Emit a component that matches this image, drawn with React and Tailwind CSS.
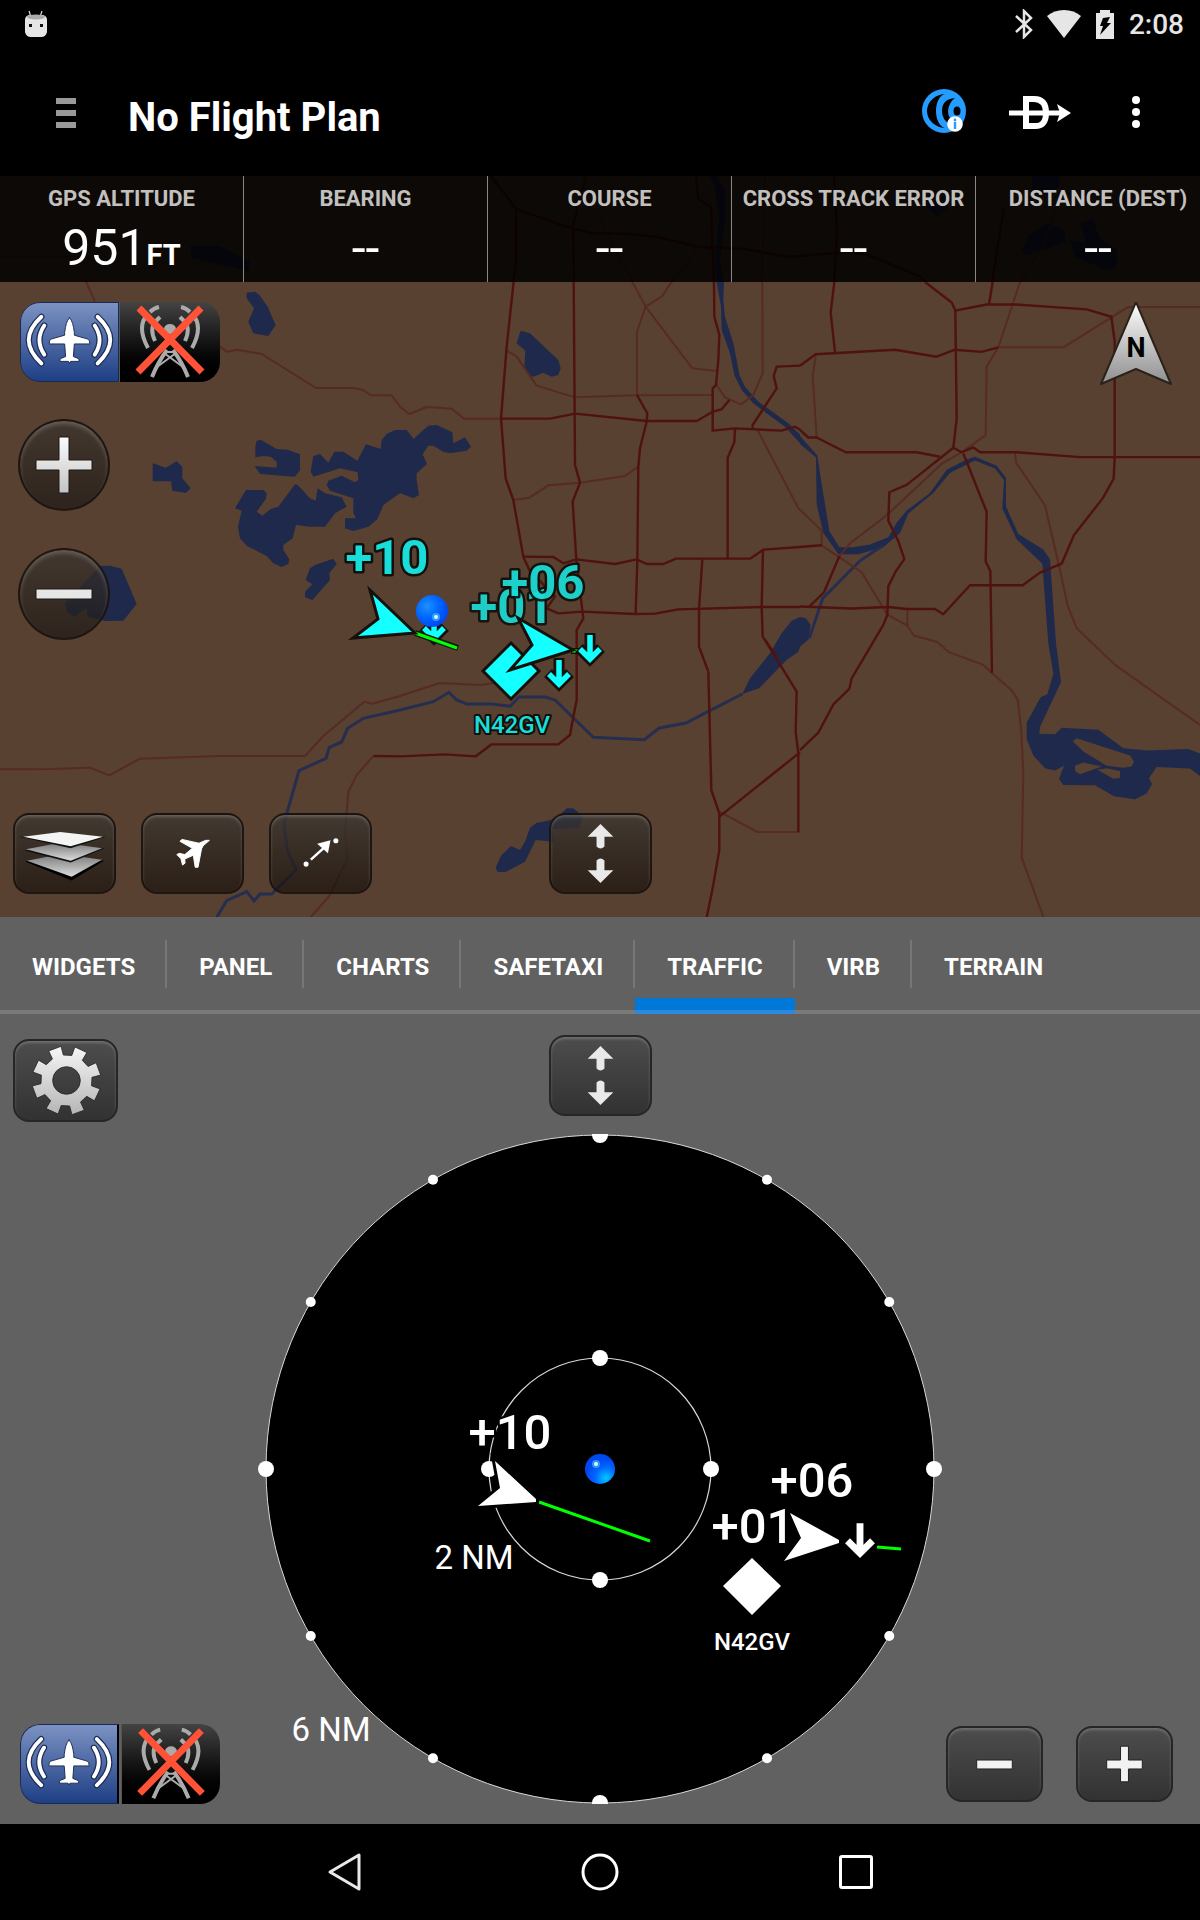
import React from "react";

const FONT = { fontFamily: "Roboto, 'Liberation Sans', sans-serif" };

/* ---------- map data: each tile has its own origin and grid ---------- */

const TILES = [
  {
    id: "north",
    transform: "translate(0 0)",
    major: [
      "491,176 516,209 516,260 513,283",
      "516,209 570,228 592,233 630,234 657,237 700,247 745,249 788,257 849,252 868,255 921,277 926,282",
      "586,176 573,225 574,283",
      "696,176 698,199 711,207 714,283",
      "834,176 837,233 834,283",
      "1004,207 992,283",
    ],
    minor: [
      "78,267 87,283",
      "0,257 78,257",
      "1065,180 1046,240 1020,283",
      "765,176 762,283",
      "600,220 633,283",
      "697,250 671,283",
    ],
    water: [
      "190,246 220,246 250,262 248,272 235,268 192,258",
      "709,176 717,176 725,190 725,217 720,260 724,283 717,283 715,260 719,217 715,187",
      "1032,176 1059,176 1059,187 1046,195 1032,190",
      "1021,252 1029,235 1048,223 1065,230 1065,243 1027,255",
      "1080,223 1092,218 1101,240 1117,250 1117,267 1109,271 1075,257 1070,240 1086,243",
      "921,203 937,200 950,193 948,208 937,216",
    ],
    creek: [],
  },
  {
    id: "northwest",
    transform: "translate(0 280) scale(.33333)",
    major: [],
    minor: [
      "258,5 285,65",
      "640,190 660,200 680,215 712,209 785,222 948,324 1060,324 1090,330 1112,346 1175,346 1200,380 1228,402 1280,381 1355,386 1392,416 1503,416",
    ],
    water: [
      "740,38 765,35 778,45 803,80 827,135 805,168 760,160 745,125 762,85 740,55",
      "458,550 497,563 530,544 547,560 547,595 572,625 558,639 517,632 513,604 458,604",
      "770,482 782,479 830,507 862,509 900,523 900,570 885,590 780,582 764,558 830,563 830,545 812,530 790,528 766,532 766,500",
      "940,528 960,522 985,548 1003,515 1030,515 1072,542 1098,493 1142,507 1145,480 1160,462 1185,450 1220,450 1241,477 1270,450 1285,437 1310,435 1357,457 1360,490 1395,472 1413,500 1400,512 1350,520 1330,515 1300,497 1285,497 1268,523 1281,552 1250,580 1250,600 1257,645 1240,655 1215,645 1200,640 1150,675 1132,718 1105,740 1060,753 1035,745 1035,715 1068,715 1060,700 1060,655 990,632 980,615 985,602 1025,587 1065,607 1075,600 1073,577 1020,565 940,590 932,575",
      "738,630 790,630 800,640 797,658 770,695 787,707 812,687 835,680 885,613 893,615 930,655 947,662 953,625 975,640 1025,652 1040,680 1005,700 975,740 930,740 888,735 878,775 850,795 850,810 868,838 865,852 845,861 820,850 800,828 740,797 720,775 714,740 725,692 705,685",
      "930,865 945,855 1000,836 1010,852 988,880 990,900 937,960 915,952 915,935 937,913 917,900",
      "300,858 330,857 365,866 410,972 370,1022 315,1023 262,1010 260,985 222,1010 200,995 195,970",
    ],
    creek: [],
  },
  {
    id: "center",
    transform: "translate(400 280) scale(.33333)",
    major: [
      "341,5 320,200 303,415 317,595 340,660 370,830 388,870 465,950 440,985 475,1000 545,995 705,1002 765,1001 835,988 1085,981 1200,981",
      "521,5 524,400 525,555 540,608 518,665 529,840 542,950 550,1015 530,1050 530,1260 520,1310 510,1365 475,1393 275,1393 227,1429 135,1423 0,1429 -80,1428",
      "303,416 450,416 525,401 740,423 890,423 938,395 965,388 988,360",
      "942,5 943,110 958,165 955,240 948,315 938,325 938,452 1005,445 1145,452 1185,440 1200,449",
      "711,345 742,400 740,425 720,505 715,560 712,840 707,1000",
      "1005,445 1003,487 983,533 983,836",
      "370,830 460,831 490,850 529,838 645,852 710,838 740,852 790,852 828,836 1050,836 1090,809 1200,801",
      "907,838 897,988 897,1100 925,1175",
      "1089,809 1085,981 1088,1070 1130,1130",
      "1200,257 1130,260 1121,288 1130,325 1058,435 1058,445",
    ],
    minor: [
      "320,212 350,230 410,317 525,352 710,346 938,345",
      "697,5 737,80 711,155 711,345",
      "815,5 785,50 737,80 877,265 950,273",
      "1087,5 1088,280 1060,345 1023,373 975,352 950,315",
      "340,660 388,653 445,616 540,608 675,588 715,560",
      "1070,445 1195,685 1200,690",
    ],
    water: [
      "350,190 362,152 390,160 475,240 482,265 475,285 455,290 430,278 400,290 385,285 373,260 376,212",
      "950,5 972,5 970,60 975,110 1000,190 1010,240 1018,285 1035,320 1075,365 1110,390 1165,430 1200,464 1200,490 1155,440 1100,400 1060,370 1025,330 1003,285 990,220 965,150 963,80",
      "1200,1011 1218,1015 1232,1035 1226,1078 1200,1100 1195,1115 1160,1140 1077,1225 1027,1242 1050,1195 1110,1120 1145,1060 1175,1022",
    ],
    creek: [],
  },
  {
    id: "east",
    transform: "translate(800 280) scale(.33333 .40816)",
    major: [
      "103,5 92,80 105,176",
      "0,210 47,182 285,171 410,188 463,171 545,176 595,165",
      "375,5 455,55 466,75 560,60 645,60 860,72 934,90 944,150 944,435 941,487 908,535 822,625 785,695 720,717 668,748 510,748 430,819 405,806 320,806 265,801 155,805 0,800",
      "578,5 567,60",
      "466,75 470,340 460,411 485,422 520,410 540,422 650,422 840,434 1200,434",
      "490,425 560,568 557,690 571,713 576,962",
      "0,367 25,386 50,386 137,422 350,422 420,433",
      "0,654 65,650",
      "28,800 72,765 118,677",
      "460,411 320,502 268,520 265,590 295,640 313,684 288,713 265,750 262,820 250,845 155,976 148,1002 100,1040 55,1109 0,1152",
    ],
    minor: [
      "47,187 38,235 50,386",
      "660,5 595,165 560,212 557,380 485,422 425,450 262,575 150,645 118,677",
      "595,165 790,165 985,66 1200,66",
      "645,422 648,447 735,552 777,700 803,798 830,853 945,943 1200,1090",
      "322,806 322,847",
      "0,563 65,614 65,650 185,716 262,820 322,847 342,871 412,887 445,911 550,943 575,962 635,1005 653,1028 664,1105 670,1210 665,1415 730,1560",
    ],
    water: [
      "0,382 52,430 65,500 88,615 118,655 160,655 210,648 265,630 290,595 320,565 390,522 440,465 500,440 525,433 590,455 618,485 618,555 655,622 730,660 750,685 768,890 783,985 720,1095 718,1112 765,1113 785,1097 895,1102 970,1147 1045,1153 1165,1149 1200,1160 1200,1215 1170,1197 1070,1193 1047,1220 1056,1235 1040,1258 1005,1272 942,1265 885,1238 790,1237 777,1222 792,1190 765,1202 735,1196 700,1165 680,1125 680,1085 722,1022 742,1015 760,965 745,890 727,695 650,635 607,560 612,490 585,462 525,442 450,472 400,522 325,572 300,620 250,655 175,672 115,672 70,620 50,550 48,435 0,402",
    ],
    creek: ["250,650 180,688 68,780 28,878"],
    islands: [
      "818,1130 830,1123 990,1165 1002,1180 995,1192 970,1195 920,1190 850,1155",
      "825,1190 850,1182 905,1192 840,1211 825,1203",
      "892,1200 920,1196 960,1203 960,1220 940,1222",
    ],
  },
  {
    id: "southwest",
    transform: "translate(0 640) scale(.33333)",
    major: [],
    minor: [
      "0,388 155,387 270,383 328,406 420,356 660,348 915,348 970,288 1093,185 1118,191 1200,168 1320,129 1440,135 1500,127",
      "1120,348 1070,405 1045,455 1035,575 1043,655 988,768 933,830",
    ],
    water: [],
    creek: [
      "650,832 680,782 740,755 762,783 780,762 815,762 888,690 862,630 852,550 897,392 978,355 988,322 1025,306 1043,265 1090,235 1200,210",
    ],
  },
  {
    id: "south",
    transform: "translate(400 640) scale(.33333)",
    major: [
      "925,95 934,450 958,520 958,630 938,745 920,832",
      "1095,0 1190,155 1187,275 1195,340 1195,577",
      "958,530 1200,337",
    ],
    minor: ["958,515 1073,576 1195,576"],
    water: [
      "430,545 470,535 500,505 520,505 550,530 537,563 457,567 462,605 407,600 375,665 315,697 292,695 287,683 303,647 333,618 360,630 375,605 390,563 410,548",
    ],
    creek: [
      "0,210 100,185 147,157 170,180 200,192 275,192 330,199 357,171 435,171 465,180 580,292 733,299 778,264 858,249 925,214 1027,162",
    ],
  },
];

function Ball({ cx, cy, r, flip }) {
  const id = flip ? "ballMap" : "ballScope";
  return (
    <g transform={`translate(${cx} ${cy})`}>
      <defs>
        <radialGradient id={id} cx={flip ? ".35" : ".7"} cy={flip ? ".35" : ".8"} r=".65">
          <stop offset="0" stopColor={flip ? "#1e90ff" : "#00c8ff"} />
          <stop offset=".55" stopColor="#0068ff" />
          <stop offset="1" stopColor="#0048f0" />
        </radialGradient>
      </defs>
      <circle r={r} fill={`url(#${id})`} />
      <circle cx={flip ? 4 : -4} cy={flip ? 6 : -5} r="4" fill="#4fc4ff" opacity=".6" />
      <circle cx={flip ? 4 : -4} cy={flip ? 6 : -5} r="2" fill="#d8faff" />
    </g>
  );
}

function DownArrow({ x, y, color, halo, size = 1 }) {
  return (
    <g transform={`translate(${x} ${y}) scale(${size})`} strokeLinecap="butt" fill="none">
      <path d="M0 -29 V-5 M-11 -14 L0 -3 L11 -14" stroke={halo} strokeWidth="11" />
      <path d="M0 -27 V-5 M-10 -13 L0 -3 L10 -13" stroke={color} strokeWidth="5.5" />
    </g>
  );
}

function MovingMap() {
  return (
    <svg
      viewBox="0 176 1200 741"
      preserveAspectRatio="xMidYMid slice"
      className="absolute inset-0 h-full w-full"
      role="img"
      aria-label="Moving map with traffic"
    >
      {TILES.map((t) => (
        <g key={t.id} transform={t.transform} fill="none">
          {t.water.map((p) => (
            <polygon key={p} points={p} fill="#1f294b" />
          ))}
          {(t.islands || []).map((p) => (
            <polygon key={p} points={p} fill="#584130" />
          ))}
          {t.creek.map((p) => (
            <polyline key={p} points={p} stroke="#262e50" strokeWidth="3" vectorEffect="non-scaling-stroke" />
          ))}
        </g>
      ))}
      {TILES.map((t) => (
        <g key={t.id} transform={t.transform} fill="none" strokeLinejoin="round">
          {t.minor.map((p) => (
            <polyline key={p} points={p} stroke="#572a23" strokeWidth="2" vectorEffect="non-scaling-stroke" />
          ))}
          {t.major.map((p) => (
            <polyline key={p} points={p} stroke="#50120f" strokeWidth="2.400" vectorEffect="non-scaling-stroke" />
          ))}
        </g>
      ))}

      <DownArrow x={434} y={641} color="#14ffff" halo="#15100c" />
      <path d="M415 633 L458 648" stroke="#0c140a" strokeWidth="6" />
      <path d="M415 633 L457 648" stroke="#00ff00" strokeWidth="3" />
      <polygon points="370,590 415,633 353,638 378,619" fill="#14ffff" stroke="#15100c" strokeWidth="3" />
      <Ball cx={432} cy={611} r={16} flip />

      <g style={FONT} textAnchor="middle" paintOrder="stroke" fontSize="49" fontWeight="700" stroke="#100f0c" strokeWidth="5" strokeLinejoin="round" fill="#19ddd8">
        <text x="387" y="574">+10</text>
        <text x="512" y="623" opacity=".9">+01</text>
        <text x="543" y="599" opacity=".92">+06</text>
      </g>

      <polygon points="511,643 539,671 511,699 483,671" fill="#14ffff" stroke="#15100c" strokeWidth="3" />
      <path d="M571 651 H586" stroke="#0c140a" strokeWidth="6" />
      <path d="M572 651 H580" stroke="#00ff00" strokeWidth="3" />
      <polygon points="518,618 573,650 510,670 532,645" fill="#14ffff" stroke="#15100c" strokeWidth="3" />
      <DownArrow x={559} y={687} color="#14ffff" halo="#15100c" />
      <DownArrow x={590} y={662} color="#14ffff" halo="#15100c" />
      <text x="512" y="733" style={FONT} textAnchor="middle" paintOrder="stroke" fontSize="24" fontWeight="500" stroke="#100f0c" strokeWidth="4" strokeLinejoin="round" fill="#19ddd8">
        N42GV
      </text>
    </svg>
  );
}

/* ---------- traffic scope ---------- */

function ringDots(radius, step) {
  const out = [];
  for (let a = 0; a < 360; a += step) {
    const rad = (a * Math.PI) / 180;
    out.push({ a, x: 600 + radius * Math.sin(rad), y: 1469 - radius * Math.cos(rad), r: a % 90 === 0 ? 8 : 5 });
  }
  return out;
}

function TrafficScope() {
  return (
    <svg
      viewBox="0 1014 1200 810"
      preserveAspectRatio="xMidYMid meet"
      className="absolute inset-0 h-full w-full"
      role="img"
      aria-label="Traffic scope"
    >
      <clipPath id="scopeClip">
        <rect x="250" y="1134" width="700" height="670" />
      </clipPath>
      <circle cx="600" cy="1469" r="334" fill="#000" stroke="#d8d8d8" strokeWidth="1" />
      <circle cx="600" cy="1469" r="111" fill="none" stroke="#d8d8d8" strokeWidth="1.200" />
      <g clipPath="url(#scopeClip)" fill="#fff">
        {ringDots(334, 30).map((d) => (
          <circle key={d.a} cx={d.x} cy={d.y} r={d.r} />
        ))}
        {ringDots(111, 90).map((d) => (
          <circle key={d.a} cx={d.x} cy={d.y} r={d.r} />
        ))}
      </g>
      <Ball cx={600} cy={1469} r={15} />

      <path d="M539 1502 L650 1541" stroke="#00ff00" strokeWidth="3" />
      <polygon points="495,1461 536,1499 536,1502 478,1506 500,1488" fill="#fff" stroke="#000" strokeWidth="6" paintOrder="stroke" />

      <path d="M877 1547 L901 1549" stroke="#00ff00" strokeWidth="3" />
      <polygon points="752,1558 781,1586 752,1615 723,1586" fill="#fff" />

      <g style={FONT} textAnchor="middle" fill="#fff" paintOrder="stroke" stroke="#000" strokeLinejoin="round">
        <text x="510" y="1449" fontSize="49" fontWeight="500" strokeWidth="5">+10</text>
        <text x="812" y="1497" fontSize="49" fontWeight="500" strokeWidth="5">+06</text>
        <text x="753" y="1543" fontSize="49" fontWeight="500" strokeWidth="5">+01</text>
        <text x="752" y="1650" fontSize="24" fontWeight="500" strokeWidth="4">N42GV</text>
      </g>
      <polygon points="790,1513 839,1540 839,1543 784,1561 801,1538" fill="#fff" stroke="#000" strokeWidth="4" paintOrder="stroke" />
      <DownArrow x={860} y={1557} color="#fff" halo="#000" size={1.25} />
      <g style={FONT} textAnchor="middle" fill="#fff" fontSize="33">
        <text x="474" y="1569">2 NM</text>
        <text x="331" y="1741">6 NM</text>
      </g>
    </svg>
  );
}

/* ---------- controls ---------- */

function AdsbSwitch({ split }) {
  return (
    <div className="flex h-20 w-[200px] overflow-hidden rounded-[20px]" role="group" aria-label="ADS-B sources">
      <button
        type="button"
        aria-label="Airborne traffic"
        className={
          "w-[99px] border border-[#1b2a52] rounded-l-[20px] bg-linear-to-b from-[#7c92c2] to-[#1f3f85] " +
          (split ? "border-r-2 border-r-black" : "")
        }
      >
        <svg viewBox="0 0 100 80" className="h-full w-full" fill="none" strokeLinecap="round">
          <g stroke="#1c2c52" strokeWidth="6.500">
            <path d="M21 14 Q-5 38 21 62 M24 23 Q14 38 24 53 M79 14 Q105 38 79 62 M76 23 Q86 38 76 53" />
          </g>
          <g stroke="#fff" strokeWidth="4">
            <path d="M21 14 Q-5 38 21 62 M24 23 Q14 38 24 53 M79 14 Q105 38 79 62 M76 23 Q86 38 76 53" />
          </g>
          <path
            d="M50 15 C47 18 46 23 45 30 L45 33 L31 37 Q29 38 29 42 L45 42 L46 55 L41 57 Q40 58 40 60 L49 60 L50 62 L51 60 L60 60 Q60 58 59 57 L54 55 L55 42 L71 42 Q71 38 69 37 L55 33 L55 30 C54 23 53 18 50 15Z"
            fill="#fff"
            stroke="#1c2c52"
            strokeWidth="1"
          />
        </svg>
      </button>
      <button
        type="button"
        aria-label="Ground station"
        className={"flex-1 border-l border-[#555] bg-linear-to-b from-[#444] to-black " + (split ? "ml-[2px]" : "")}
      >
        <svg viewBox="0 0 100 80" className="h-full w-full" fill="none">
          <g stroke="#ababab" strokeWidth="4">
            <path d="M28 46 Q16 24 28 12 M30 10 Q34 6 39 5 M72 46 Q84 24 72 12 M70 10 Q66 6 61 5" />
            <path d="M35 39 Q29 26 36 19 L40 15 M65 39 Q71 26 64 19 L60 15" />
            <path d="M47 48 Q38 60 32 75 M53 48 Q62 60 68 75" />
          </g>
          <path d="M44 51 L63 65 M56 51 L37 65 M44 50 H56" stroke="#ababab" strokeWidth="2" />
          <ellipse cx="50" cy="27" rx="6" ry="5" fill="#ababab" />
          <path d="M19 6 L82 70 M81 6 L18 70" stroke="#ff5237" strokeWidth="7" />
        </svg>
      </button>
    </div>
  );
}

function RoundButton({ label, children }) {
  return (
    <button
      type="button"
      aria-label={label}
      className="size-[92px] rounded-full border-2 border-[#1a130e]/85 bg-linear-to-b from-[#3b3530]/75 to-[#1c1815]/70 shadow-[inset_0_3px_4px_rgba(255,255,255,0.2)]"
    >
      <svg viewBox="0 0 88 88" className="h-full w-full">
        <defs>
          <linearGradient id="silver" x1="0" y1="0" x2="0" y2="88" gradientUnits="userSpaceOnUse">
            <stop offset=".15" stopColor="#fff" />
            <stop offset=".85" stopColor="#c0c0c0" />
          </linearGradient>
        </defs>
        {children}
      </svg>
    </button>
  );
}

function PanelButton({ label, solid, className, children }) {
  return (
    <button
      type="button"
      aria-label={label}
      className={
        (solid
          ? "bg-linear-to-b from-[#4d4d4d] to-[#323232] border-[#262626] "
          : "bg-linear-to-b from-[#3b3733]/75 to-[#140e0a]/65 border-[#1a130e]/85 ") +
        "rounded-2xl border-2 shadow-[inset_0_2px_3px_rgba(255,255,255,0.2)] " +
        className
      }
    >
      {children}
    </button>
  );
}

function UpDownIcon() {
  return (
    <svg viewBox="0 0 100 78" className="h-full w-full" fill="#e9e9e9">
      <path d="M50 9 L63 22 H54 V32 Q50 36 46 32 V22 H37Z" />
      <path d="M50 69 L63 56 H54 V46 Q50 42 46 46 V56 H37Z" />
    </svg>
  );
}

function gearPath() {
  const pts = [];
  for (let i = 0; i < 8; i++) {
    const c = i * 45 - 20;
    [[-13, 26], [-11, 35], [11, 35], [13, 26]].forEach(([da, r]) => {
      const a = ((c + da) * Math.PI) / 180;
      pts.push(`${(52 + r * Math.sin(a)).toFixed(1)} ${(40 - r * Math.cos(a)).toFixed(1)}`);
    });
  }
  return `M${pts.join(" L")}Z M66 40 A14 14 0 1 0 38 40 A14 14 0 1 0 66 40Z`;
}

const FIELDS = [
  { label: "GPS ALTITUDE", value: "951", unit: "FT" },
  { label: "BEARING", value: "--" },
  { label: "COURSE", value: "--" },
  { label: "CROSS TRACK ERROR", value: "--" },
  { label: "DISTANCE (DEST)", value: "--" },
];

const TABS = ["WIDGETS", "PANEL", "CHARTS", "SAFETAXI", "TRAFFIC", "VIRB", "TERRAIN"];

function StatusBar() {
  return (
    <div className="flex h-12 items-center justify-between pl-6 pr-4 text-[#e6e6e6]">
      <svg viewBox="0 0 24 28" className="h-7 w-6">
        <path d="M5 1 L7 7 M18 1 L16 7" stroke="#ddd" strokeWidth="1.200" />
        <path d="M1 10 Q1 6 5 5 H19 Q23 6 23 10 L23 22 Q22 27 17 27 H7 Q2 27 1 22Z" fill="#e6e6e6" />
        <ellipse cx="12" cy="7" rx="9" ry="2.500" fill="#aaa" />
        <rect x="5" y="14" width="3" height="3" fill="#111" />
        <rect x="16" y="14" width="3" height="3" fill="#111" />
      </svg>
      <div className="flex items-center">
        <svg viewBox="0 0 18 30" className="h-[30px] w-[18px]" fill="none" stroke="currentColor" strokeWidth="2.500">
          <path d="M1 7 L16 21 L9 28 V2 L16 9 L1 23" />
        </svg>
        <svg viewBox="0 0 34 28" className="ml-[14px] h-7 w-[34px]" fill="currentColor">
          <path d="M17 28 L0 6 Q7 0 17 0 T34 6Z" />
        </svg>
        <svg viewBox="0 0 20 29" className="ml-[14px] h-[29px] w-5" fill="currentColor">
          <path d="M5 0 H15 V3 H19 V29 H1 V3 H5Z" />
          <path d="M8 8 L15 7 L12 13 H16 L5 25 L8 16 H5Z" fill="#000" />
        </svg>
        <span className="ml-[14px] pt-[2px] text-[28px] leading-9 font-medium">2:08</span>
      </div>
    </div>
  );
}

function AppBar() {
  return (
    <header className="flex h-32 items-center pl-[56px] pr-[60px]">
      <button type="button" aria-label="Menu" className="flex flex-col gap-[6px] pt-[2px]">
        <span className="h-[6px] w-5 bg-[#999]" />
        <span className="h-[6px] w-5 bg-[#999]" />
        <span className="h-[6px] w-5 bg-[#999]" />
      </button>
      <h1 className="ml-[52px] pt-3 text-[40px] leading-12 font-bold">No Flight Plan</h1>
      <div className="ml-auto flex items-center">
        <button type="button" aria-label="Connext">
          <svg viewBox="0 0 46 46" className="size-[46px]">
            <circle cx="22" cy="22" r="22" fill="#259cff" />
            <path d="M24 5 A19 17 0 0 0 24 39 A10 17 0 0 1 24 5Z" fill="#000" />
            <path d="M33 9 Q20 10 20 22 Q20 31 28 35 L30 32 Q26 27 26 22 Q27 13 33 9Z" fill="#000" />
            <ellipse cx="35" cy="22" rx="3.500" ry="4.500" fill="#000" />
            <circle cx="33" cy="35" r="7.800" fill="#fff" />
            <path d="M33 33 V40" stroke="#259cff" strokeWidth="2.400" />
            <circle cx="33" cy="31" r="1.400" fill="#259cff" />
          </svg>
        </button>
        <button type="button" aria-label="Direct to" className="ml-[41px]">
          <svg viewBox="0 0 62 40" className="h-10 w-[62px]" fill="none" stroke="#fff">
            <path d="M17 7 H25 Q37 7 37 21 T25 34 H17Z" strokeWidth="6" />
            <path d="M0 21 H52" strokeWidth="5" />
            <path d="M62 21 L48 12 L51 21 L48 30Z" fill="#fff" stroke="none" />
          </svg>
        </button>
        <button type="button" aria-label="More options" className="ml-[61px] flex flex-col gap-1">
          <span className="size-2 rounded-full bg-white" />
          <span className="size-2 rounded-full bg-white" />
          <span className="size-2 rounded-full bg-white" />
        </button>
      </div>
    </header>
  );
}

export default function App() {
  return (
    <div className="flex min-h-screen flex-col overflow-x-hidden bg-black font-['Roboto','Liberation_Sans',sans-serif] text-white">
      <StatusBar />
      <AppBar />

      <section className="relative flex aspect-[1200/741] flex-col bg-[#584130]">
        <MovingMap />
        <div className="relative flex h-[106px] overflow-hidden bg-black/85">
          {FIELDS.map((f) => (
            <div key={f.label} className="flex w-[244px] shrink-0 flex-col items-center border-r border-[#8a8886] pt-[9px] last:border-r-0">
              <span className="text-[22px] leading-7 font-bold whitespace-nowrap text-[#c2c0be]">{f.label}</span>
              <span className="text-[50px] leading-[70px]">
                {f.value}
                {f.unit && <span className="text-[29px] font-bold">{f.unit}</span>}
              </span>
            </div>
          ))}
        </div>
        <div className="relative flex flex-1 flex-col px-[13px] pt-5 pb-[23px]">
          <div className="flex items-start justify-between">
            <div className="flex flex-col gap-[37px] pl-[5px]">
              <div className="pl-[2px]">
                <AdsbSwitch />
              </div>
              <RoundButton label="Zoom in">
                <path d="M39 16 H49 V39 H72 V49 H49 V72 H39 V49 H16 V39 H39Z" fill="url(#silver)" stroke="#1c1712" strokeWidth="1" />
              </RoundButton>
              <RoundButton label="Zoom out">
                <path d="M16 39 H72 V49 H16Z" fill="#e6e6e6" stroke="#1c1712" strokeWidth="1" />
              </RoundButton>
            </div>
            <button type="button" aria-label="North up" className="mr-[14px]">
              <svg viewBox="0 0 74 86" className="h-[86px] w-[74px]">
                <defs>
                  <linearGradient id="north" x1="0" y1="0" x2="0" y2="1">
                    <stop offset="0" stopColor="#fff" />
                    <stop offset="1" stopColor="#8e8e8e" />
                  </linearGradient>
                </defs>
                <path d="M37 0 L72 82 L37 67 L2 82Z" fill="url(#north)" stroke="#2a221b" strokeWidth="2" strokeLinejoin="round" />
                <text x="37" y="55" style={FONT} textAnchor="middle" fontSize="27" fontWeight="700" fill="#000">N</text>
              </svg>
            </button>
          </div>
          <div className="mt-auto grid grid-cols-[1fr_auto_1fr] items-end">
            <div className="flex gap-[25px]">
              <PanelButton label="Layers" className="h-[81px] w-[103px]">
                <svg viewBox="0 0 103 81" className="h-full w-full">
                  <defs>
                    <linearGradient id="sheet" x1="0" y1="0" x2="0" y2="1">
                      <stop offset="0" stopColor="#777" />
                      <stop offset="1" stopColor="#ddd" />
                    </linearGradient>
                  </defs>
                  <path d="M10 49 L59 69 L93 48 L48 42Z" fill="#000" />
                  <path d="M12 48 L48 41 L91 47 L59 65Z" fill="url(#sheet)" />
                  <path d="M8 37 L58 50 L94 35Z" fill="#111" />
                  <path d="M11 36 L48 29 L91 35 L58 48Z" fill="url(#sheet)" />
                  <path d="M4 23 L58 35 L95 23Z" fill="#111" />
                  <path d="M8 23 L47 18 L92 23 L58 33Z" fill="#f4f4f4" />
                </svg>
              </PanelButton>
              <PanelButton label="Aircraft" className="h-[81px] w-[103px]">
                <svg viewBox="422 520 309 243" className="h-full w-full">
                  <path
                    d="M630 600 L610 617 L605 627 L594 685 L585 685 L579 647 L552 659 L553 672 L545 678 L540 658 L527 645 L535 641 L552 645 L576 625 L537 603 L543 597 L597 609 L618 600Z"
                    fill="#fff"
                    stroke="#fff"
                    strokeWidth="3"
                    strokeLinejoin="round"
                  />
                </svg>
              </PanelButton>
              <PanelButton label="Route" className="h-[81px] w-[103px]">
                <svg viewBox="806 520 309 243" className="h-full w-full" fill="#fff">
                  <circle cx="915" cy="675" r="8" />
                  <circle cx="1009" cy="601" r="8" />
                  <path d="M930 661 L972 623" stroke="#fff" strokeWidth="8" />
                  <path d="M992 600 L984 641 L950 611Z" />
                </svg>
              </PanelButton>
            </div>
            <PanelButton label="Resize map" className="h-[81px] w-[103px]">
              <UpDownIcon />
            </PanelButton>
          </div>
        </div>
      </section>

      <nav className="flex h-[97px] bg-[#616161]">
        <div className="flex w-full border-b-4 border-[#7a7a7a]" role="tablist">
          {TABS.map((t, i) => (
            <button
              key={t}
              type="button"
              role="tab"
              aria-selected={t === "TRAFFIC"}
              className={
                "relative -mb-1 flex items-center border-b-4 text-2xl font-bold " +
                (t === "TRAFFIC" ? "border-[#2a8ade]" : "border-transparent")
              }
            >
              <span className="px-8 pt-[6px]">{t}</span>
              {i < TABS.length - 1 && <span className="-ml-[2px] h-12 w-[2px] bg-[#777]" />}
              {t === "TRAFFIC" && <span className="absolute inset-x-0 bottom-0 h-3 bg-[#0078d8]" />}
            </button>
          ))}
        </div>
      </nav>

      <section className="relative flex aspect-[1200/810] flex-col justify-between bg-[#616161] px-[13px] pt-[21px] pb-5">
        <TrafficScope />
        <div className="relative grid grid-cols-[1fr_auto_1fr] items-start">
          <PanelButton solid label="Traffic settings" className="mt-1 h-[83px] w-[105px]">
            <svg viewBox="0 0 102 80" className="h-full w-full">
              <defs>
                <linearGradient id="gear" x1="0" y1="0" x2="0" y2="1">
                  <stop offset="0" stopColor="#f6f6f6" />
                  <stop offset="1" stopColor="#b5b5b5" />
                </linearGradient>
              </defs>
              <path d={gearPath()} fill="url(#gear)" fillRule="evenodd" stroke="#222" strokeWidth=".8" />
            </svg>
          </PanelButton>
          <PanelButton solid label="Resize panel" className="h-[81px] w-[103px]">
            <UpDownIcon />
          </PanelButton>
        </div>
        <div className="relative flex items-end justify-between pr-[14px] pl-[7px]">
          <AdsbSwitch split />
          <div className="flex items-center gap-[33px] pb-[2px]">
            <PanelButton solid label="Decrease range" className="h-[76px] w-[97px]">
              <svg viewBox="0 0 94 72" className="h-full w-full">
                <path d="M29 32 H65 V41 H29Z" fill="#f2f2f2" stroke="#222" strokeWidth="1" />
              </svg>
            </PanelButton>
            <PanelButton solid label="Increase range" className="h-[76px] w-[97px]">
              <svg viewBox="0 0 94 72" className="h-full w-full">
                <path d="M43 18 H51 V32 H65 V41 H51 V54 H43 V41 H29 V32 H43Z" fill="#f2f2f2" stroke="#222" strokeWidth="1" />
              </svg>
            </PanelButton>
          </div>
        </div>
      </section>

      <footer className="grid h-24 grid-cols-[1fr_auto_1fr] items-center gap-[219px] bg-black">
        <button type="button" aria-label="Back" className="justify-self-end">
          <svg viewBox="0 0 36 40" className="h-10 w-9" fill="none" stroke="#e8e8e8" strokeWidth="3" strokeLinejoin="round">
            <path d="M34 3 V37 L5 20Z" />
          </svg>
        </button>
        <button type="button" aria-label="Home">
          <svg viewBox="0 0 40 40" className="size-10" fill="none" stroke="#fff" strokeWidth="3">
            <circle cx="20" cy="20" r="17" />
          </svg>
        </button>
        <button type="button" aria-label="Recent apps" className="size-[34px] justify-self-start rounded-[3px] border-3 border-white" />
      </footer>
    </div>
  );
}
